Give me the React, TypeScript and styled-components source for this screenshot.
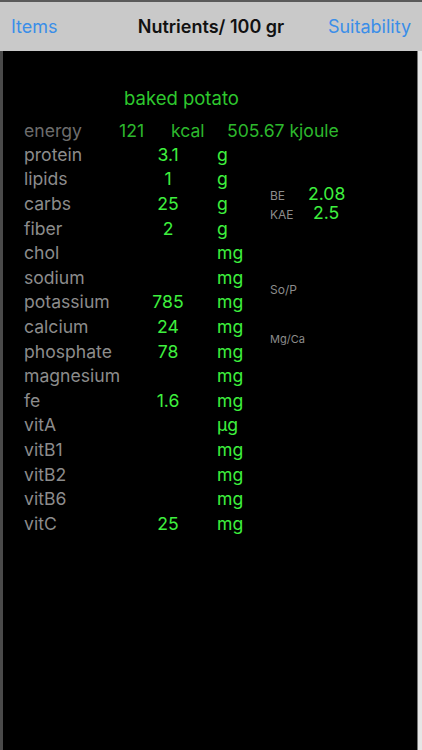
import * as React from 'react';
import styled, { createGlobalStyle } from 'styled-components';

const GlobalStyle = createGlobalStyle`
  html, body {
    margin: 0;
    padding: 0;
    background: #000;
  }
  body {
    font-family: Inter, "Liberation Sans", sans-serif;
  }
`;

interface INutrient {
  label: string;
  value?: string;
  unit: string;
}

const nutrients: INutrient[] = [
  { label: 'protein', value: '3.1', unit: 'g' },
  { label: 'lipids', value: '1', unit: 'g' },
  { label: 'carbs', value: '25', unit: 'g' },
  { label: 'fiber', value: '2', unit: 'g' },
  { label: 'chol', unit: 'mg' },
  { label: 'sodium', unit: 'mg' },
  { label: 'potassium', value: '785', unit: 'mg' },
  { label: 'calcium', value: '24', unit: 'mg' },
  { label: 'phosphate', value: '78', unit: 'mg' },
  { label: 'magnesium', unit: 'mg' },
  { label: 'fe', value: '1.6', unit: 'mg' },
  { label: 'vitA', unit: 'µg' },
  { label: 'vitB1', unit: 'mg' },
  { label: 'vitB2', unit: 'mg' },
  { label: 'vitB6', unit: 'mg' },
  { label: 'vitC', value: '25', unit: 'mg' },
];

const Screen = styled.div`
  width: 422px;
  height: 750px;
  display: flex;
  flex-direction: column;
  overflow: hidden;
`;

const NavBar = styled.header`
  height: 49px;
  flex: none;
  border-top: 2px solid #5a5a5a;
  background: #c9c9c9;
  display: grid;
  grid-template-columns: 1fr auto 1fr;
  align-items: center;
  padding: 0 11px;
  font-size: 18px;
`;

const NavLink = styled.span<{ $align?: 'left' | 'right' }>`
  color: #3a8ee8;
  text-align: ${p => p.$align ?? 'left'};
`;

const NavTitle = styled.span`
  color: #111;
  font-weight: 600;
  font-size: 18px;
`;

const Body = styled.main`
  flex: 1;
  background: #000;
  border-left: 3px solid #4a4a4a;
  border-right: 4px solid #e6e6e6;
  box-shadow: inset -1px 0 0 #777;
  padding: 36px 0 0 21px;
`;

const FoodName = styled.div`
  color: #2ec82e;
  font-size: 18.5px;
  line-height: 22px;
  padding-left: 100px;
`;

const EnergyRow = styled.div`
  display: flex;
  align-items: center;
  height: 24px;
  margin-top: 9px;
  font-size: 17.6px;
  color: #2db82d;
`;

const EnergyLabel = styled.span`
  width: 95px;
  color: #6d6d6d;
`;

const EnergyCell = styled.span<{ $width: number }>`
  width: ${p => p.$width}px;
`;

const Table = styled.div`
  display: grid;
  grid-template-columns: 114px 60px 19px 53px 1fr;
  grid-auto-rows: 24.6px;
  font-size: 17.6px;
  align-items: center;
`;

const Label = styled.span`
  grid-column: 1;
  color: #8c8c8c;
`;

const Value = styled.span`
  grid-column: 2;
  text-align: center;
  color: #3ef03e;
`;

const Unit = styled.span`
  grid-column: 4;
  color: #3ef03e;
`;

const Side = styled.div<{ $rows: string }>`
  grid-column: 5;
  grid-row: ${p => p.$rows};
  align-self: center;
  display: flex;
  flex-direction: column;
`;

const SideLine = styled.div`
  display: flex;
  align-items: baseline;
  height: 19px;
  line-height: 19px;
`;

const SideLabel = styled.span<{ $size?: number }>`
  color: #8c8c8c;
  font-size: ${p => p.$size ?? 12}px;
  width: 38px;
`;

const SideValue = styled.span<{ $indent?: number }>`
  color: #3ef03e;
  font-size: 17.6px;
  padding-left: ${p => p.$indent ?? 0}px;
`;

const App: React.FunctionComponent = () => (
  <>
    <GlobalStyle />
    <Screen>
      <NavBar>
        <NavLink>Items</NavLink>
        <NavTitle>Nutrients/ 100 gr</NavTitle>
        <NavLink $align="right">Suitability</NavLink>
      </NavBar>
      <Body>
        <FoodName>baked potato</FoodName>
        <EnergyRow>
          <EnergyLabel>energy</EnergyLabel>
          <EnergyCell $width={52}>121</EnergyCell>
          <EnergyCell $width={56}>kcal</EnergyCell>
          <EnergyCell $width={120}>505.67 kjoule</EnergyCell>
        </EnergyRow>
        <Table>
          {nutrients.map((n, i) => (
            <React.Fragment key={n.label}>
              <Label style={{ gridRow: i + 1 }}>{n.label}</Label>
              <Value style={{ gridRow: i + 1 }}>{n.value ?? ''}</Value>
              <Unit style={{ gridRow: i + 1 }}>{n.unit}</Unit>
            </React.Fragment>
          ))}
          <Side $rows="2 / 5">
            <SideLine>
              <SideLabel>BE</SideLabel>
              <SideValue>2.08</SideValue>
            </SideLine>
            <SideLine>
              <SideLabel>KAE</SideLabel>
              <SideValue $indent={5}>2.5</SideValue>
            </SideLine>
          </Side>
          <Side $rows="6 / 8">
            <SideLabel>So/P</SideLabel>
          </Side>
          <Side $rows="8 / 10">
            <SideLabel $size={11}>Mg/Ca</SideLabel>
          </Side>
        </Table>
      </Body>
    </Screen>
  </>
);

export default App;
